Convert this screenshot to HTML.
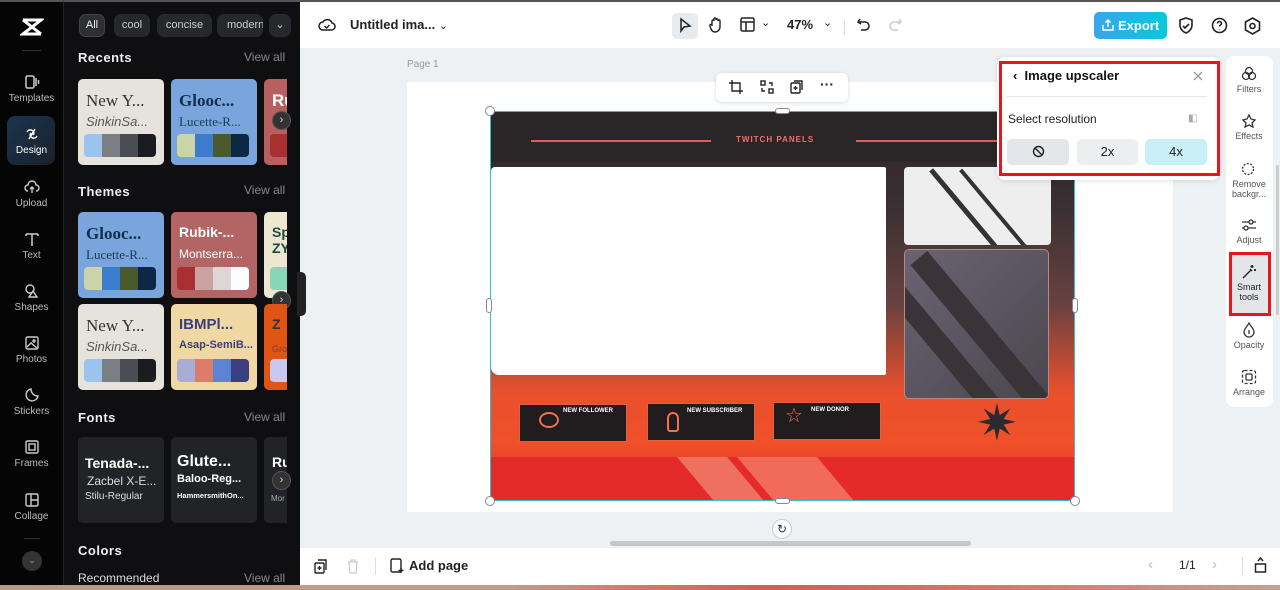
<!DOCTYPE html>
<html><head><meta charset="utf-8"><style>
*{box-sizing:border-box;margin:0;padding:0}
body{width:1280px;height:590px;overflow:hidden;position:relative;font-family:"Liberation Sans",sans-serif;background:#eef1f4}
.abs{position:absolute}
#lb{left:0;top:0;width:63px;height:590px;background:#050505;border-top:2px solid #555}
#lp{left:63px;top:0;width:237px;height:590px;background:#0f0f11;border-top:2px solid #555;border-left:1px solid #222}
.ni{position:absolute;left:0;width:63px;text-align:center;color:#bbb;font-size:10px}
.ni svg{display:block;margin:0 auto 3px}
.chip{position:absolute;top:12px;height:23px;border-radius:7px;background:#27282b;color:#ccc;font-size:11px;line-height:23px;text-align:center}
.h{position:absolute;left:78px;color:#eee;font-weight:bold;font-size:13px;letter-spacing:.5px}
.va{position:absolute;right:13px;color:#888;font-size:12px}
.card{position:absolute;width:86px;height:86px;border-radius:5px;overflow:hidden}
.card .t1{position:absolute;left:8px;top:12px;font-size:17px;font-family:"Liberation Serif",serif;white-space:nowrap}
.card .t2{position:absolute;left:8px;top:35px;font-size:13px;white-space:nowrap}
.sw{position:absolute;left:6px;top:55px;width:72px;height:23px;border-radius:4px;overflow:hidden;display:flex}
.sw i{flex:1}
.arr{position:absolute;width:19px;height:19px;border-radius:50%;background:#333;border:1px solid #555;color:#ddd;font-size:11px;text-align:center;line-height:17px}
.fc{position:absolute;top:437px;width:86px;height:86px;border-radius:5px;background:#222327;color:#fff;overflow:hidden}
#top{left:300px;top:0;width:980px;height:48px;background:#fff;border-top:2px solid #555}
#bot{left:300px;top:548px;width:980px;height:37px;background:#fff}
.rt{position:absolute;left:1226px;width:46px;text-align:center;font-size:9px;color:#555}
.rt svg{display:block;margin:0 auto 2px}
</style></head><body>
<div id="lb" class="abs">
 <svg class="abs" style="left:20px;top:15px" width="24" height="20" viewBox="0 0 24 20"><path d="M3 3h18L3 17h18M3 3l18 14" stroke="#fff" stroke-width="3" fill="none"/></svg>
 <div class="abs" style="left:22px;top:48px;width:19px;height:1px;background:#333"></div>
 <div class="ni" style="top:72px"><svg width="16" height="16" viewBox="0 0 16 16" fill="none" stroke="#ccc" stroke-width="1.5"><rect x="2" y="2" width="8" height="12" rx="1.5"/><path d="M12 4v8M14.5 6v4"/></svg>Templates</div>
 <div class="abs" style="left:7px;top:114px;width:48px;height:49px;border-radius:8px;background:linear-gradient(135deg,#1a3550,#1b2028)"></div>
 <div class="ni" style="top:124px;color:#fff"><svg width="16" height="16" viewBox="0 0 16 16" fill="none" stroke="#fff" stroke-width="1.5"><path d="M3 6c3-5 9 0 6 3M13 10c-3 5-9 0-6-3M5 13l6-10"/></svg>Design</div>
 <div class="ni" style="top:177px"><svg width="16" height="16" viewBox="0 0 16 16" fill="none" stroke="#ccc" stroke-width="1.4"><path d="M4 12a3 3 0 010-6 4 4 0 018 0 3 3 0 010 6M8 14V8M6 10l2-2 2 2"/></svg>Upload</div>
 <div class="ni" style="top:229px"><svg width="16" height="16" viewBox="0 0 16 16" fill="none" stroke="#ccc" stroke-width="1.5"><path d="M2 3h12M8 3v12M2 3v2M14 3v2"/></svg>Text</div>
 <div class="ni" style="top:281px"><svg width="16" height="16" viewBox="0 0 16 16" fill="none" stroke="#ccc" stroke-width="1.4"><circle cx="6" cy="6" r="4"/><path d="M9 8l4 6H5z"/></svg>Shapes</div>
 <div class="ni" style="top:333px"><svg width="16" height="16" viewBox="0 0 16 16" fill="none" stroke="#ccc" stroke-width="1.4"><rect x="2" y="2" width="12" height="12" rx="1.5"/><path d="M3 12l4-4 6 5"/><circle cx="10" cy="6" r="1"/></svg>Photos</div>
 <div class="ni" style="top:385px"><svg width="16" height="16" viewBox="0 0 16 16" fill="none" stroke="#ccc" stroke-width="1.4"><path d="M14 9A6 6 0 117 2c0 4 3 7 7 7z"/></svg>Stickers</div>
 <div class="ni" style="top:437px"><svg width="16" height="16" viewBox="0 0 16 16" fill="none" stroke="#ccc" stroke-width="1.4"><rect x="2" y="2" width="12" height="12" rx="1.5"/><rect x="5" y="5" width="6" height="6"/></svg>Frames</div>
 <div class="ni" style="top:490px"><svg width="16" height="16" viewBox="0 0 16 16" fill="none" stroke="#ccc" stroke-width="1.4"><rect x="2" y="2" width="12" height="12" rx="1.5"/><path d="M7 2v12M7 8h7"/></svg>Collage</div>
 <div class="abs" style="left:24px;top:536px;width:16px;height:1px;background:#333"></div>
 <div class="abs" style="left:22px;top:549px;width:20px;height:20px;border-radius:50%;background:#333;color:#aaa;font-size:9px;text-align:center;line-height:19px">⌄</div>
</div>
<div id="lp" class="abs">
 <div class="chip" style="left:15px;width:26px;background:#2e2f33;border:1px solid #444;color:#eee;line-height:21px">All</div>
 <div class="chip" style="left:50px;width:36px">cool</div>
 <div class="chip" style="left:93px;width:55px">concise</div>
 <div class="chip" style="left:153px;width:46px;text-align:left;padding-left:10px;overflow:hidden">modern</div>
 <div class="chip" style="left:205px;width:22px">⌄</div>
</div>
<div class="h" style="top:50px">Recents</div><div class="va" style="left:244px;top:50px">View all</div>
<div class="card" style="left:78px;top:79px;background:#e6e2dc"><div class="t1" style="color:#333">New Y...</div><div class="t2" style="color:#555;font-style:italic">SinkinSa...</div><div class="sw"><i style="background:#9cc3ee"></i><i style="background:#7b7e82"></i><i style="background:#4a4d53"></i><i style="background:#1a1c20"></i></div></div>
<div class="card" style="left:171px;top:79px;background:#79a5dc"><div class="t1" style="color:#0f2f4e;font-weight:bold">Glooc...</div><div class="t2" style="color:#183a5c;font-family:'Liberation Serif',serif">Lucette-R...</div><div class="sw"><i style="background:#cbd4a8"></i><i style="background:#3b7ccc"></i><i style="background:#4a5a2c"></i><i style="background:#0d2844"></i></div></div>
<div class="card" style="left:264px;top:79px;width:23px;border-radius:5px 0 0 5px;background:#b86060"><div class="t1" style="color:#fff;font-family:'Liberation Sans';font-weight:bold">Ru</div><div class="sw" style="background:#a83030"></div></div>
<div class="arr" style="left:272px;top:111px">›</div>
<div class="h" style="top:184px">Themes</div><div class="va" style="left:244px;top:183px">View all</div>
<div class="card" style="left:78px;top:212px;background:#79a5dc"><div class="t1" style="color:#0f2f4e;font-weight:bold">Glooc...</div><div class="t2" style="color:#183a5c;font-family:'Liberation Serif',serif">Lucette-R...</div><div class="sw"><i style="background:#cbd4a8"></i><i style="background:#3b7ccc"></i><i style="background:#4a5a2c"></i><i style="background:#0d2844"></i></div></div>
<div class="card" style="left:171px;top:212px;background:#b36464"><div class="t1" style="color:#fff;font-family:'Liberation Sans';font-weight:bold;font-size:14px">Rubik-...</div><div class="t2" style="color:#fff;font-size:12px">Montserra...</div><div class="sw"><i style="background:#a83032"></i><i style="background:#caa2a2"></i><i style="background:#e0d5d5"></i><i style="background:#fcfdff"></i></div></div>
<div class="card" style="left:264px;top:212px;width:23px;border-radius:5px 0 0 5px;background:#ede6d0"><div class="t1" style="color:#1d4a3a;font-family:'Liberation Sans';font-weight:bold;font-size:14px">Sp<br>ZY</div><div class="sw" style="background:#86d6b8"></div></div>
<div class="arr" style="left:272px;top:291px">›</div>
<div class="card" style="left:78px;top:304px;background:#e6e2dc"><div class="t1" style="color:#333">New Y...</div><div class="t2" style="color:#555;font-style:italic">SinkinSa...</div><div class="sw"><i style="background:#9cc3ee"></i><i style="background:#7b7e82"></i><i style="background:#4a4d53"></i><i style="background:#1a1c20"></i></div></div>
<div class="card" style="left:171px;top:304px;background:#f0d8a4"><div class="t1" style="color:#3a3f80;font-family:'Liberation Sans';font-weight:bold;font-size:15px">IBMPl...</div><div class="t2" style="color:#3a3f80;font-weight:bold;font-size:11px">Asap-SemiB...</div><div class="sw"><i style="background:#a9acd4"></i><i style="background:#dc7c6c"></i><i style="background:#5d84d4"></i><i style="background:#3a3f80"></i></div></div>
<div class="card" style="left:264px;top:304px;width:23px;border-radius:5px 0 0 5px;background:#e05414"><div class="t1" style="color:#333;font-family:'Liberation Sans';font-weight:bold;font-size:14px">Z</div><div class="t2" style="color:#933;font-size:9px;top:40px">Gro</div><div class="sw" style="background:#c8c8f0"></div></div>
<div class="h" style="top:410px">Fonts</div><div class="va" style="left:244px;top:410px">View all</div>
<div class="fc" style="left:78px"><div class="abs" style="left:7px;top:18px;font-weight:bold;font-size:14px">Tenada-...</div><div class="abs" style="left:9px;top:37px;font-size:12px;color:#ddd">Zacbel X-E...</div><div class="abs" style="left:7px;top:54px;font-size:10px;color:#ddd">Stilu-Regular</div></div>
<div class="fc" style="left:171px"><div class="abs" style="left:6px;top:16px;font-weight:bold;font-size:16px">Glute...</div><div class="abs" style="left:6px;top:36px;font-weight:bold;font-size:11px">Baloo-Reg...</div><div class="abs" style="left:6px;top:54px;font-size:7.5px;font-weight:bold">HammersmithOn...</div></div>
<div class="fc" style="left:264px;width:23px;border-radius:5px 0 0 5px"><div class="abs" style="left:8px;top:17px;font-weight:bold;font-size:14px">Ru</div><div class="abs" style="left:7px;top:57px;font-size:8px;color:#aaa">Mor</div></div>
<div class="arr" style="left:272px;top:471px">›</div>
<div class="h" style="top:543px">Colors</div>
<div class="abs" style="left:78px;top:571px;color:#ddd;font-size:12px">Recommended</div><div class="va" style="left:244px;top:571px">View all</div>
<div class="abs" style="left:297px;top:272px;width:9px;height:44px;background:#222;border-radius:0 5px 5px 0"></div>

<div id="top" class="abs">
 <svg class="abs" style="left:18px;top:15px" width="18" height="16" viewBox="0 0 18 16" fill="none" stroke="#222" stroke-width="1.5"><path d="M5 13a4 4 0 010-8 5 5 0 019 1 3.5 3.5 0 01-1 7z"/><path d="M6.5 9l2 2 3-3"/></svg>
 <div class="abs" style="left:50px;top:15px;font-size:13px;font-weight:bold;color:#222">Untitled ima... <span style="font-weight:normal;font-size:11px">⌄</span></div>
 <div class="abs" style="left:372px;top:11px;width:26px;height:26px;border-radius:5px;background:#e8ebee"></div>
 <svg class="abs" style="left:378px;top:15px" width="14" height="16" viewBox="0 0 14 16" fill="none" stroke="#222" stroke-width="1.5"><path d="M3 2v12l3-4 6-1z"/></svg>
 <svg class="abs" style="left:408px;top:14px" width="16" height="18" viewBox="0 0 16 18" fill="none" stroke="#222" stroke-width="1.4"><path d="M4 10V5a1 1 0 012 0V3a1 1 0 012 0v1a1 1 0 012 0v1a1 1 0 012 0v6a5 5 0 01-5 5c-2 0-3-1-4-3L2 10a1 1 0 012-1z"/></svg>
 <svg class="abs" style="left:440px;top:15px" width="15" height="15" viewBox="0 0 15 15" fill="none" stroke="#222" stroke-width="1.5"><rect x="1" y="1" width="13" height="13" rx="1.5"/><path d="M1 5h13M6 5v9"/></svg>
 <div class="abs" style="left:461px;top:14px;font-size:11px;color:#222">⌄</div>
 <div class="abs" style="left:487px;top:15px;font-size:13px;font-weight:bold;color:#222">47%</div>
 <div class="abs" style="left:523px;top:14px;font-size:11px;color:#222">⌄</div>
 <div class="abs" style="left:544px;top:17px;width:1px;height:16px;background:#ddd"></div>
 <svg class="abs" style="left:557px;top:16px" width="14" height="14" viewBox="0 0 14 14" fill="none" stroke="#222" stroke-width="1.5"><path d="M3 1L1 4l3 2M1 4h7a4 4 0 010 8H4"/></svg>
 <svg class="abs" style="left:588px;top:16px" width="14" height="14" viewBox="0 0 14 14" fill="none" stroke="#ccc" stroke-width="1.5"><path d="M11 1l2 3-3 2M13 4H6a4 4 0 000 8h4"/></svg>
 <div class="abs" style="left:794px;top:10px;width:73px;height:27px;border-radius:5px;background:linear-gradient(90deg,#3aa6ec,#05c8dc);color:#fff;font-size:13px;font-weight:bold;line-height:27px;padding-left:24px">Export</div>
 <svg class="abs" style="left:802px;top:17px" width="12" height="12" viewBox="0 0 12 12" fill="none" stroke="#fff" stroke-width="1.4"><path d="M1 6v5h10V6M6 8V1M3.5 3.5L6 1l2.5 2.5"/></svg>
 <svg class="abs" style="left:878px;top:15px" width="16" height="18" viewBox="0 0 16 18" fill="none" stroke="#222" stroke-width="1.6"><path d="M8 1l6 2v5c0 4-3 7-6 8-3-1-6-4-6-8V3z"/><path d="M5 9l2 2 4-4"/></svg>
 <svg class="abs" style="left:911px;top:15px" width="17" height="17" viewBox="0 0 17 17" fill="none" stroke="#222" stroke-width="1.6"><circle cx="8.5" cy="8.5" r="7"/><path d="M6.5 6.5a2 2 0 114 0c0 1.5-2 1.5-2 3M8.5 12v.5"/></svg>
 <svg class="abs" style="left:944px;top:15px" width="17" height="18" viewBox="0 0 17 18" fill="none" stroke="#222" stroke-width="1.6"><path d="M8.5 1l7 4v8l-7 4-7-4V5z"/><circle cx="8.5" cy="9" r="2.5"/></svg>
</div>

<div class="abs" style="left:407px;top:59px;font-size:10px;color:#999">Page 1</div>
<div class="abs" style="left:407px;top:82px;width:766px;height:430px;background:#fff"></div>
<div class="abs" style="left:716px;top:73px;width:132px;height:29px;background:#fff;border-radius:6px;box-shadow:0 1px 4px rgba(0,0,0,.15)"></div>
<svg class="abs" style="left:729px;top:80px" width="14" height="14" viewBox="0 0 14 14" fill="none" stroke="#222" stroke-width="1.4"><path d="M3 0v11h11M0 3h11v11"/></svg>
<svg class="abs" style="left:760px;top:80px" width="14" height="14" viewBox="0 0 14 14" fill="none" stroke="#222" stroke-width="1.4"><rect x="1" y="1" width="4" height="4"/><rect x="9" y="9" width="4" height="4"/><path d="M9 3h3v3M5 11H2V8"/></svg>
<svg class="abs" style="left:790px;top:80px" width="14" height="14" viewBox="0 0 14 14" fill="none" stroke="#222" stroke-width="1.4"><rect x="1" y="3" width="9" height="10" rx="1"/><path d="M4 1h8v9M5.5 6v4M3.5 8h4"/></svg>
<div class="abs" style="left:820px;top:76px;font-size:14px;font-weight:bold;color:#222">···</div>

<div class="abs" style="left:490px;top:111px;width:585px;height:390px;overflow:hidden;background:linear-gradient(180deg,#2b2628 0%,#3a3033 25%,#6a4240 50%,#e8502c 72%,#f0502a 85%,#e82a2a 100%);border:1px solid #2ec0d0">
 <div class="abs" style="left:0;top:0;width:585px;height:50px;background:#2a2527"></div>
 <div class="abs" style="left:40px;top:28px;width:180px;height:2px;background:#e25a5a"></div>
 <div class="abs" style="left:365px;top:28px;width:200px;height:2px;background:#e25a5a"></div>
 <div class="abs" style="left:245px;top:23px;font-size:8px;font-weight:bold;color:#f07070;letter-spacing:1px">TWITCH PANELS</div>
 <div class="abs" style="left:0;top:55px;width:395px;height:208px;background:#fff;border-radius:4px 2px 2px 8px"></div>
 <div class="abs" style="left:413px;top:55px;width:147px;height:78px;background:#eee;border-radius:4px;overflow:hidden"><div class="abs" style="left:60px;top:-10px;width:5px;height:110px;background:#333;transform:rotate(-40deg)"></div><div class="abs" style="left:90px;top:-10px;width:4px;height:110px;background:#333;transform:rotate(-40deg)"></div></div>
 <div class="abs" style="left:413px;top:137px;width:145px;height:150px;background:linear-gradient(135deg,#6a6472 0%,#4c4650 100%);border:1px solid #b88;border-radius:5px;overflow:hidden"><div class="abs" style="left:30px;top:-20px;width:20px;height:240px;background:#3a3438;transform:rotate(-40deg)"></div><div class="abs" style="left:80px;top:-20px;width:22px;height:240px;background:#3a3438;transform:rotate(-40deg)"></div></div>
 <div class="abs" style="left:28px;top:292px;width:108px;height:38px;background:#211c1d;border:1px solid #e06040"></div>
 <div class="abs" style="left:48px;top:300px;width:20px;height:16px;border:2px solid #f07050;border-radius:50%"></div>
 <div class="abs" style="left:72px;top:296px;font-size:6px;font-weight:bold;color:#fff">NEW FOLLOWER</div>
 <div class="abs" style="left:156px;top:291px;width:108px;height:38px;background:#211c1d;border:1px solid #e06040"></div>
 <div class="abs" style="left:196px;top:296px;font-size:6px;font-weight:bold;color:#fff">NEW SUBSCRIBER</div>
 <div class="abs" style="left:176px;top:300px;width:12px;height:20px;border:2px solid #f07050;border-radius:6px 6px 3px 3px"></div>
 <div class="abs" style="left:282px;top:290px;width:108px;height:38px;background:#211c1d;border:1px solid #e06040"></div>
 <div class="abs" style="left:320px;top:295px;font-size:6px;font-weight:bold;color:#fff">NEW DONOR</div>
 <div class="abs" style="left:294px;top:291px;font-size:20px;color:#f07050">☆</div>
 <div class="abs" style="left:485px;top:286px;font-size:50px;color:#2a2a30;line-height:1">✷</div>
 <div class="abs" style="left:0;top:345px;width:585px;height:45px;background:#e52a2a"></div>
 <div class="abs" style="left:205px;top:345px;width:50px;height:45px;background:#f07060;transform:skewX(40deg)"></div>
 <div class="abs" style="left:265px;top:345px;width:80px;height:45px;background:#f26a5a;transform:skewX(40deg)"></div>
</div>
<div class="abs" style="left:485px;top:106px;width:10px;height:10px;border-radius:50%;background:#fff;border:1px solid #888"></div>
<div class="abs" style="left:1070px;top:106px;width:10px;height:10px;border-radius:50%;background:#fff;border:1px solid #888"></div>
<div class="abs" style="left:485px;top:496px;width:10px;height:10px;border-radius:50%;background:#fff;border:1px solid #888"></div>
<div class="abs" style="left:1070px;top:496px;width:10px;height:10px;border-radius:50%;background:#fff;border:1px solid #888"></div>
<div class="abs" style="left:775px;top:108px;width:15px;height:6px;border-radius:3px;background:#fff;border:1px solid #888"></div>
<div class="abs" style="left:775px;top:498px;width:15px;height:6px;border-radius:3px;background:#fff;border:1px solid #888"></div>
<div class="abs" style="left:486px;top:298px;width:6px;height:15px;border-radius:3px;background:#fff;border:1px solid #888"></div>
<div class="abs" style="left:1072px;top:298px;width:6px;height:15px;border-radius:3px;background:#fff;border:1px solid #888"></div>
<div class="abs" style="left:772px;top:519px;width:20px;height:20px;border-radius:50%;background:#fff;border:1px solid #ccc;text-align:center;font-size:12px;line-height:18px;color:#333">↻</div>
<div class="abs" style="left:610px;top:541px;width:361px;height:5px;border-radius:3px;background:#c4c8cc"></div>

<div class="abs" style="left:997px;top:57px;width:223px;height:123px;background:#fff;border-radius:8px;box-shadow:0 1px 6px rgba(0,0,0,.12)"></div>
<div class="abs" style="left:999px;top:61px;width:221px;height:115px;border:3px solid #e8141e"></div>
<div class="abs" style="left:1013px;top:68px;font-size:13px;font-weight:bold;color:#111">‹&nbsp; Image upscaler</div>
<svg class="abs" style="left:1193px;top:71px" width="10" height="10" viewBox="0 0 10 10" stroke="#999" stroke-width="1.3"><path d="M1 1l8 8M9 1l-8 8"/></svg>
<div class="abs" style="left:1007px;top:96px;width:200px;height:1px;background:#e8e8e8"></div>
<div class="abs" style="left:1008px;top:112px;font-size:12px;color:#222">Select resolution</div>
<div class="abs" style="left:1188px;top:113px;font-size:10px;color:#aaa">◧</div>
<div class="abs" style="left:1007px;top:139px;width:62px;height:26px;border-radius:5px;background:#e4e6e8"></div>
<svg class="abs" style="left:1032px;top:145px" width="13" height="13" viewBox="0 0 13 13" fill="none" stroke="#222" stroke-width="1.4"><circle cx="6.5" cy="6.5" r="5"/><path d="M3 3l7 7"/></svg>
<div class="abs" style="left:1077px;top:139px;width:61px;height:26px;border-radius:5px;background:#eceef0;text-align:center;line-height:26px;font-size:13px;color:#222">2x</div>
<div class="abs" style="left:1145px;top:139px;width:62px;height:26px;border-radius:5px;background:#c9f0f6;text-align:center;line-height:26px;font-size:13px;color:#222">4x</div>

<div class="abs" style="left:1226px;top:56px;width:47px;height:351px;background:#fff;border-radius:8px"></div>
<div class="abs" style="left:1276px;top:165px;width:3px;height:150px;background:#ccc;border-radius:2px"></div>
<div class="rt" style="top:66px"><svg width="16" height="16" viewBox="0 0 16 16" fill="none" stroke="#333" stroke-width="1.3"><circle cx="8" cy="5" r="3.5"/><circle cx="5" cy="10" r="3.5"/><circle cx="11" cy="10" r="3.5"/></svg>Filters</div>
<div class="rt" style="top:113px"><svg width="16" height="16" viewBox="0 0 16 16" fill="none" stroke="#333" stroke-width="1.3"><path d="M8 2l2 4 4 1-3 3 1 4-4-2-4 2 1-4-3-3 4-1z"/></svg>Effects</div>
<div class="rt" style="top:161px;line-height:10px"><svg width="16" height="16" viewBox="0 0 16 16" fill="none" stroke="#333" stroke-width="1.3" stroke-dasharray="2 1.5"><circle cx="7" cy="8" r="5.5"/></svg>Remove<br>backgr...</div>
<div class="rt" style="top:217px"><svg width="16" height="16" viewBox="0 0 16 16" fill="none" stroke="#333" stroke-width="1.3"><path d="M1 5h14M1 11h14"/><circle cx="10" cy="5" r="2" fill="#fff"/><circle cx="5" cy="11" r="2" fill="#fff"/></svg>Adjust</div>
<div class="abs" style="left:1229px;top:252px;width:42px;height:64px;border:3px solid #e8141e;background:#e3e5e8"></div>
<div class="rt" style="top:264px;line-height:10px;color:#222"><svg width="16" height="16" viewBox="0 0 16 16" fill="none" stroke="#222" stroke-width="1.4"><path d="M2 14l8-8M9 5l2 2M11 1v3M9.5 2.5h3M14 5v2M13 6h2"/></svg>Smart<br>tools</div>
<div class="rt" style="top:322px"><svg width="16" height="16" viewBox="0 0 16 16" fill="none" stroke="#333" stroke-width="1.3"><path d="M8 1C6 5 3 7 3 10a5 5 0 0010 0c0-3-3-5-5-9zM8 8v4"/></svg>Opacity</div>
<div class="rt" style="top:369px"><svg width="16" height="16" viewBox="0 0 16 16" fill="none" stroke="#333" stroke-width="1.3"><rect x="1.5" y="1.5" width="13" height="13" rx="2" stroke-dasharray="3 2"/><rect x="5" y="5" width="6" height="6" rx="1"/></svg>Arrange</div>

<div id="bot" class="abs">
 <svg class="abs" style="left:14px;top:11px" width="14" height="15" viewBox="0 0 14 15" fill="none" stroke="#222" stroke-width="1.4"><rect x="1" y="4" width="9" height="10" rx="1"/><path d="M4 1h8v10M5.5 7v4M3.5 9h4"/></svg>
 <svg class="abs" style="left:47px;top:11px" width="12" height="15" viewBox="0 0 12 15" fill="none" stroke="#ccc" stroke-width="1.3"><path d="M1 3h10M4 3V1h4v2M2 3l1 11h6l1-11"/></svg>
 <div class="abs" style="left:75px;top:9px;width:1px;height:18px;background:#ddd"></div>
 <svg class="abs" style="left:90px;top:10px" width="15" height="16" viewBox="0 0 15 16" fill="none" stroke="#222" stroke-width="1.4"><rect x="1" y="1" width="10" height="13" rx="1.5"/><path d="M11 10v5M8.5 12.5h5"/></svg>
 <div class="abs" style="left:109px;top:10px;font-size:13px;font-weight:bold;color:#222">Add page</div>
 <div class="abs" style="left:848px;top:8px;font-size:15px;color:#bbb">‹</div>
 <div class="abs" style="left:879px;top:10px;font-size:12px;color:#222">1/1</div>
 <div class="abs" style="left:912px;top:8px;font-size:15px;color:#bbb">›</div>
 <div class="abs" style="left:942px;top:9px;width:1px;height:18px;background:#ddd"></div>
 <svg class="abs" style="left:954px;top:9px" width="13" height="16" viewBox="0 0 13 16" fill="none" stroke="#222" stroke-width="1.5"><rect x="1.5" y="7" width="10" height="8"/><path d="M4 4l2.5-3L9 4"/></svg>
</div>
<div class="abs" style="left:0;top:585px;width:1280px;height:5px;background:linear-gradient(90deg,#b89a80,#c49a88 40%,#d06050 60%,#c8a090)"></div>
</body></html>
